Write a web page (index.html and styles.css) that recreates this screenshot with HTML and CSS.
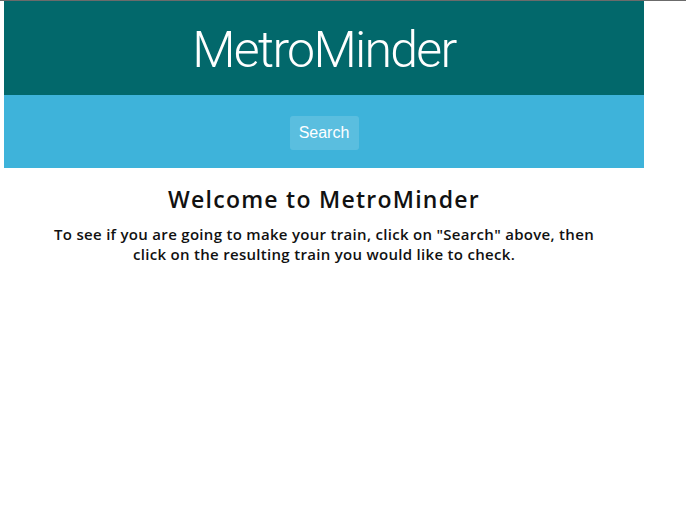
FILE: index.html
```html
<!DOCTYPE html>
<html>
<head>
<meta charset="utf-8">
<link rel="stylesheet" href="styles.css">
</head>
<body>
<div class="topline"></div>
<div class="page">
  <header class="brand">
    <h1 class="brand-title">MetroMinder</h1>
  </header>
  <nav class="nav">
    <button class="nav-btn">Search</button>
  </nav>
  <main class="content">
    <h2 class="welcome">Welcome to MetroMinder</h2>
    <p class="intro">To see if you are going to make your train, click on "Search" above, then click on the resulting train you would like to check.</p>
  </main>
</div>
</body>
</html>
```
FILE: styles.css
```css
html, body {
  margin: 0;
  padding: 0;
  background: #ffffff;
}
.topline {
  height: 1px;
  background: #6b6b6b;
}
.page {
  width: 640px;
  margin-left: 4px;
}
.brand {
  height: 94px;
  background: #02686b;
  display: flex;
  align-items: center;
  justify-content: center;
}
.brand-title {
  margin: 0;
  font-family: Roboto, sans-serif;
  font-weight: 300;
  font-size: 50px;
  color: #ffffff;
  letter-spacing: -1.7px;
  position: relative;
  top: 2px;
}
.nav {
  height: 73px;
  background: #3eb3da;
  display: flex;
  align-items: center;
  justify-content: center;
}
.nav-btn {
  width: 69px;
  height: 34px;
  border: none;
  border-radius: 3px;
  background: rgba(255, 255, 255, 0.15);
  color: #ffffff;
  font-family: "Liberation Sans", Arial, sans-serif;
  font-size: 16px;
  padding: 0;
  margin-top: 3px;
}
.content {
  text-align: center;
  padding-top: 15px;
}
.welcome {
  margin: 0;
  font-family: "Open Sans", sans-serif;
  font-weight: 600;
  font-size: 23px;
  letter-spacing: 1.25px;
  color: #111;
}
.intro {
  margin: 9px 0 0;
  font-family: "Open Sans", sans-serif;
  font-weight: 600;
  font-size: 15px;
  letter-spacing: 0.3px;
  line-height: 20px;
  color: #111;
  padding: 0 38px;
}
```
